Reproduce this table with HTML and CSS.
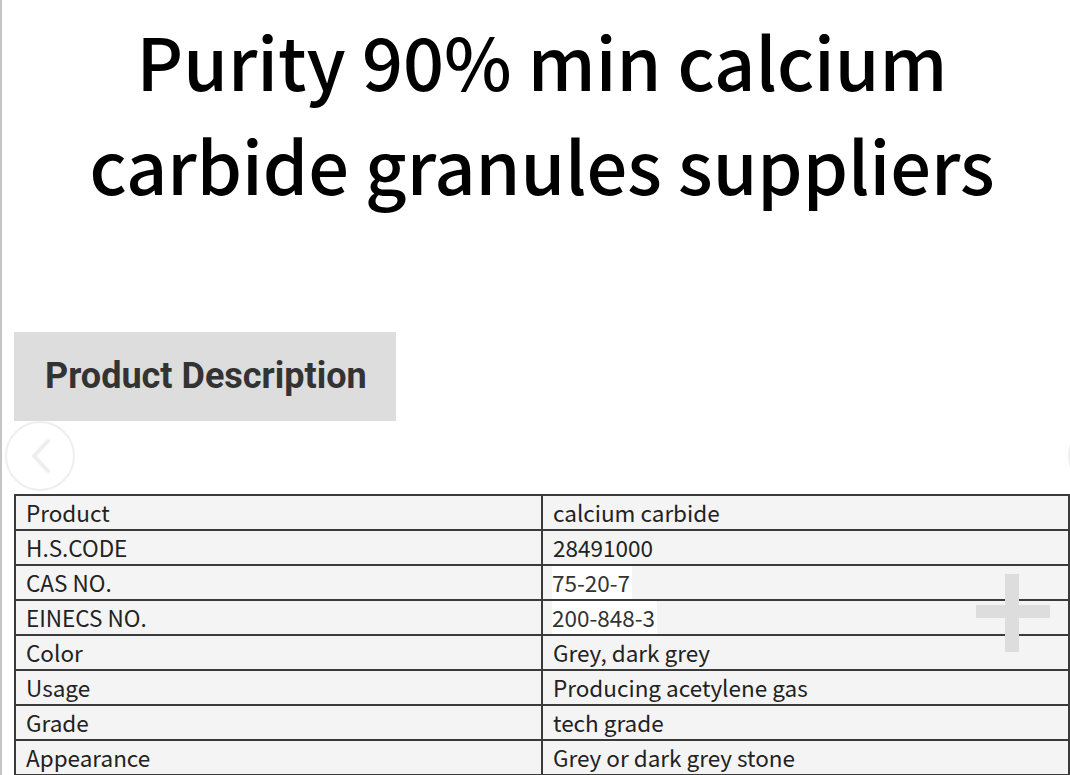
FILE: index.html
```html
<!DOCTYPE html>
<html>
<head>
<meta charset="utf-8">
<link rel="stylesheet" href="styles.css">
</head>
<body>
<div class="page">
  <h1 class="title">Purity 90% min calcium carbide granules suppliers</h1>
  <div class="section-head">Product Description</div>
  <div class="carousel">
    <div class="arrow arrow-left">
      <svg width="72" height="72" viewBox="0 0 72 72"><circle cx="36" cy="36" r="34" fill="none" stroke="#eeeeee" stroke-width="2"/><path d="M44 21 L30 36 L44 51" fill="none" stroke="#eeeeee" stroke-width="4" stroke-linecap="round" stroke-linejoin="round"/></svg>
    </div>
    <div class="arrow arrow-right">
      <svg width="72" height="72" viewBox="0 0 72 72"><circle cx="36" cy="36" r="34" fill="none" stroke="#eeeeee" stroke-width="2"/></svg>
    </div>
  </div>
  <div class="table-wrap">
    <table class="spec">
      <tr><td>Product</td><td>calcium carbide</td></tr>
      <tr><td>H.S.CODE</td><td>28491000</td></tr>
      <tr><td>CAS NO.</td><td><span class="hl">75-20-7</span></td></tr>
      <tr><td>EINECS NO.</td><td><span class="hl">200-848-3</span></td></tr>
      <tr><td>Color</td><td>Grey, dark grey</td></tr>
      <tr><td>Usage</td><td>Producing acetylene gas</td></tr>
      <tr><td>Grade</td><td>tech grade</td></tr>
      <tr><td>Appearance</td><td>Grey or dark grey stone</td></tr>
    </table>
    <div class="plus"><span class="plus-v"></span><span class="plus-h"></span></div>
  </div>
</div>
</body>
</html>
```

FILE: styles.css
```css
html, body {
  margin: 0;
  padding: 0;
  background: #fff;
  overflow: hidden;
}
body {
  border-left: 2px solid #c4c4c4;
  height: 775px;
  box-sizing: border-box;
  font-family: "Noto Sans CJK SC", "Noto Sans", sans-serif;
}
.page {
  margin-left: 12px;
  width: 1056px;
}
.title {
  margin: 0;
  padding-top: 8px;
  font-size: 72px;
  line-height: 104px;
  font-weight: 500;
  text-align: center;
  color: #000;
  height: 332px;
  box-sizing: border-box;
}
.section-head {
  display: inline-block;
  background: #dddddd;
  color: #333;
  font-family: Roboto, "Liberation Sans", sans-serif;
  font-weight: 700;
  font-size: 36px;
  line-height: 89px;
  padding: 0 0 0 31px;
  box-sizing: border-box;
  width: 382px;
  white-space: nowrap;
  vertical-align: top;
}
.carousel {
  position: relative;
  height: 73px;
}
.arrow {
  position: absolute;
  top: -1px;
  width: 72px;
  height: 72px;
}
.arrow-left { left: -10px; }
.arrow-right { left: 1053px; }
.table-wrap {
  position: relative;
}
.spec {
  width: 1056px;
  border-collapse: collapse;
  background: #f4f4f4;
  font-size: 22.5px;
  color: #222;
}
.spec td {
  border: 2px solid #3a3a3a;
  padding: 0 10px;
  height: 33px;
  line-height: 33px;
  width: 50%;
  white-space: nowrap;
}
.hl {
  background: #fff;
  color: #333;
  display: inline-block;
  margin-left: -1px;
  padding-right: 2px;
}
.plus {
  position: absolute;
  left: 962px;
  top: 80px;
  width: 74px;
  height: 78px;
}
.plus-v {
  position: absolute;
  left: 29px;
  top: 0;
  width: 14px;
  height: 78px;
  background: #dddddd;
}
.plus-h {
  position: absolute;
  left: 0;
  top: 31px;
  width: 74px;
  height: 13px;
  background: #dddddd;
}
```
